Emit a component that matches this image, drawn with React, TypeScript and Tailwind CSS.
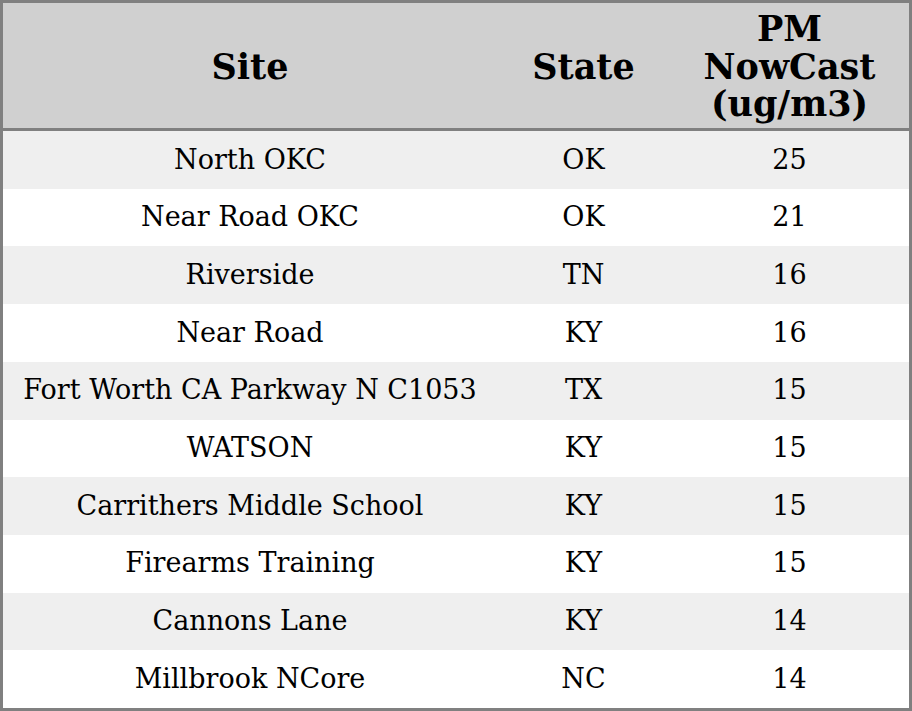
const ROWS: [string, string, number][] = [
  ["North OKC", "OK", 25],
  ["Near Road OKC", "OK", 21],
  ["Riverside", "TN", 16],
  ["Near Road", "KY", 16],
  ["Fort Worth CA Parkway N C1053", "TX", 15],
  ["WATSON", "KY", 15],
  ["Carrithers Middle School", "KY", 15],
  ["Firearms Training", "KY", 15],
  ["Cannons Lane", "KY", 14],
  ["Millbrook NCore", "NC", 14],
];

export default function App() {
  return (
    <div
      className="w-[912px] h-[711px] border-[3px] border-[#808080] flex flex-col text-black bg-white"
      style={{ fontFamily: '"DejaVu Serif", serif' }}
    >
      {/* header */}
      <div className="h-[128px] shrink-0 grid grid-cols-[494px_173px_1fr] bg-[#d0d0d0] border-b-[3px] border-[#808080] text-[35px] font-bold leading-[37.5px]">
        <div className="flex items-center justify-center pt-[2px]">Site</div>
        <div className="flex items-center justify-center pt-[2px]">State</div>
        <div className="flex items-center justify-center text-center pt-[2px]">
          PM
          <br />
          NowCast
          <br />
          (ug/m3)
        </div>
      </div>

      {/* rows */}
      <div className="flex-1 grid grid-rows-10 text-[27px]">
        {ROWS.map(([site, state, pm], i) => (
          <div
            key={site}
            className={
              "grid grid-cols-[494px_173px_1fr] items-center text-center " +
              (i % 2 === 0 ? "bg-[#efefef]" : "bg-white")
            }
          >
            <div>{site}</div>
            <div>{state}</div>
            <div>{pm}</div>
          </div>
        ))}
      </div>
    </div>
  );
}
